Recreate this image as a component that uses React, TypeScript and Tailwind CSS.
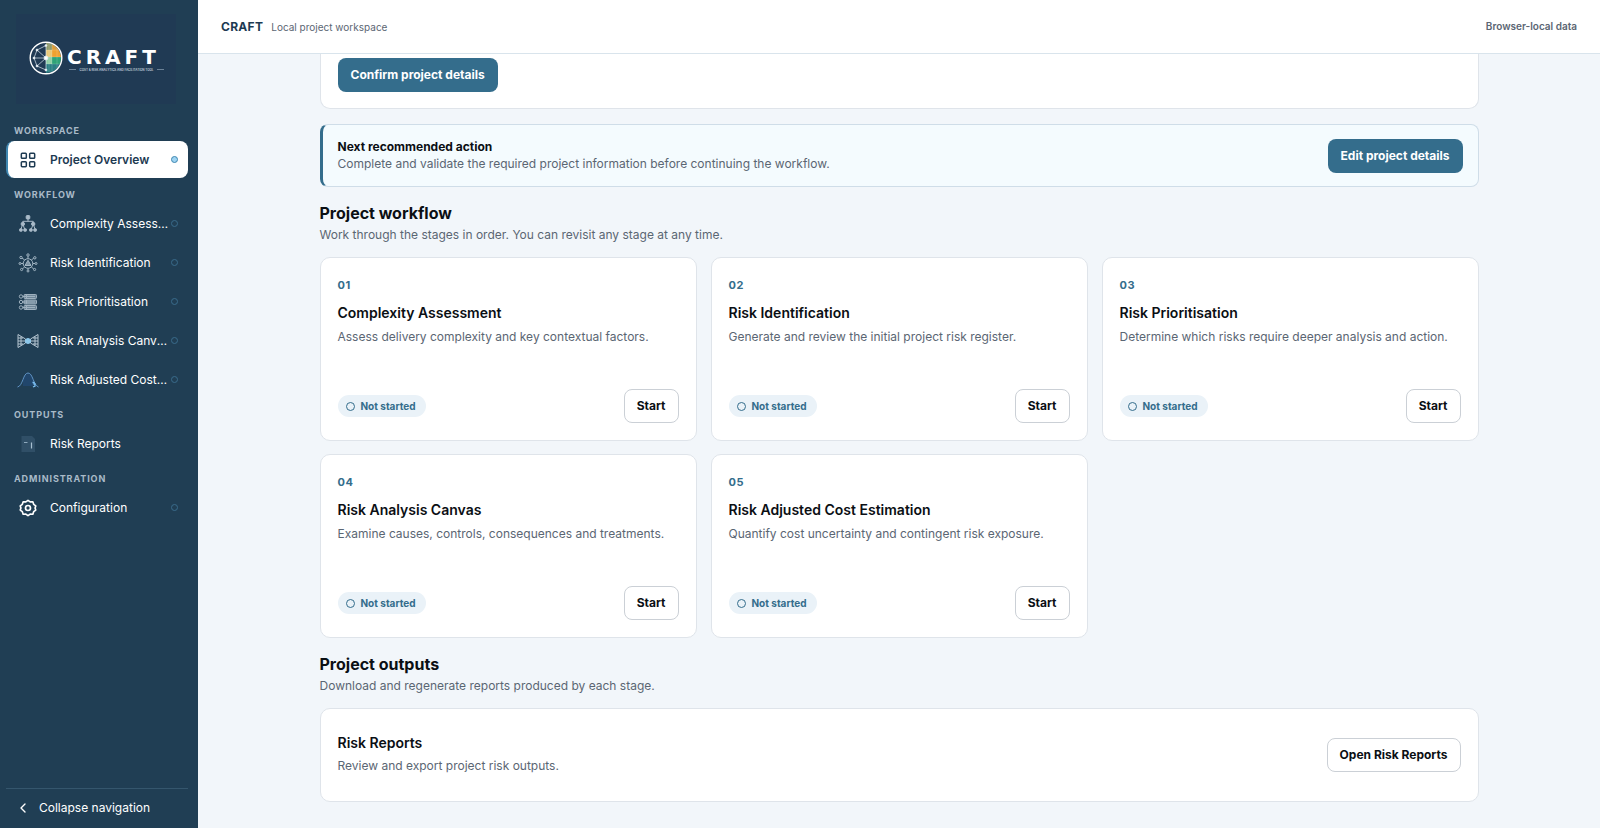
import React from "react";
import { ChevronLeft } from "lucide-react";

function OverviewIcon() {
  return (
    <svg viewBox="0 0 24 24" className="size-5" fill="none" stroke="currentColor" strokeWidth="1.8">
      <rect x="4" y="4" width="6" height="6" rx="1" />
      <rect x="14" y="4" width="6" height="6" rx="1" />
      <rect x="4" y="14" width="6" height="6" rx="1" />
      <rect x="14" y="14" width="6" height="6" rx="1" />
    </svg>
  );
}

function ComplexityIcon() {
  return (
    <svg viewBox="0 0 20 20" className="size-5" fill="#a9bac8" stroke="#a9bac8" strokeWidth="1">
      <rect x="8.2" y="1.6" width="3.6" height="3.4" rx="0.8" />
      <path d="M10 5v2.500M4.800 9.500V7.300h10.400V9.500M4.800 10l-2 5.500M4.800 10l2 5.500M15.200 10l-2 5.500M15.200 10l2 5.500" fill="none" />
      <circle cx="4.800" cy="10" r="1.700" />
      <circle cx="15.200" cy="10" r="1.700" />
      <rect x="1.600" y="14.800" width="2.600" height="2.400" rx="0.500" />
      <rect x="5.800" y="14.800" width="2.600" height="2.400" rx="0.500" />
      <rect x="11.600" y="14.800" width="2.600" height="2.400" rx="0.500" />
      <rect x="15.800" y="14.800" width="2.600" height="2.400" rx="0.500" />
    </svg>
  );
}

function IdentificationIcon() {
  return (
    <svg viewBox="0 0 20 20" className="size-5" fill="none" stroke="#a3b6c4" strokeWidth="1">
      <circle cx="10" cy="10.500" r="4.800" />
      <path d="M10 7.300l3 5.200H7z" fill="#7e95a6" />
      <path d="M10 5.700V3M10 15.300v1.700M5.200 10.500H3M14.800 10.500H17M6.700 7L4 5M13.300 7l2.500-1.800M6.700 14l-2.500 2M13.300 14l2.500 2" />
      <g fill="#203e54">
        <circle cx="10" cy="2" r="1.200" />
        <circle cx="3" cy="4.500" r="1.200" />
        <circle cx="16.800" cy="4.800" r="1.200" />
        <circle cx="2" cy="10.500" r="1" />
        <circle cx="18" cy="10.500" r="1" />
        <circle cx="3.600" cy="16.500" r="1.100" />
        <circle cx="10" cy="18" r="1" />
        <circle cx="16.600" cy="16.500" r="1.100" />
      </g>
    </svg>
  );
}

function PrioritisationIcon() {
  return (
    <svg viewBox="0 0 20 20" className="size-5" fill="none" stroke="#9fb1bf" strokeWidth="1">
      {[4.5, 10, 15.5].map((y) => (
        <g key={y}>
          <circle cx="3" cy={y} r="1.700" />
          <rect x="6" y={y - 2} width="12.500" height="4" rx="0.800" fill="#6f8799" />
          <path d={`M4.600 ${y}H17M8.500 ${y - 1.8}v3.600`} />
        </g>
      ))}
    </svg>
  );
}

function BowtieIcon() {
  return (
    <svg viewBox="0 0 22 16" className="h-4 w-[22px]" fill="none" stroke="#b4c4d0" strokeWidth="1">
      <path d="M1 1.500v13L8.500 10V6zM21 1.500v13L13.500 10V6z" />
      <path d="M1 5h5M1 8h7M1 11h5M16 5h5M14 8h7M16 11h5M4 3.500v9M18 3.500v9" />
      <circle cx="11" cy="8" r="2.500" fill="#8cc7ea" stroke="#8cc7ea" />
    </svg>
  );
}

function CurveIcon() {
  return (
    <svg viewBox="0 0 22 18" className="h-[18px] w-[22px]" fill="none">
      <path d="M6 15V8q2-5.500 5-5.500T16 8v7z" fill="#21466c" />
      <path d="M0.500 16C6 15 6 2 11 2s5 12 10.500 14" stroke="#5f93c4" strokeWidth="1" />
      <path d="M15.500 11.500h1.500v1.500h1v2l-2 1" stroke="#7cc0f5" strokeWidth="1.300" />
    </svg>
  );
}

function ReportsIcon() {
  return (
    <svg viewBox="0 0 20 20" className="size-5" fill="none">
      <path d="M3.500 2h10.500l3 3v13H3.500z" fill="#304f67" />
      <path d="M6 8.500h3.500" stroke="#8ea9bd" />
      <path d="M13.500 8.500v6" stroke="#a8c0d1" strokeWidth="1.200" />
    </svg>
  );
}

function ConfigurationIcon() {
  return (
    <svg viewBox="0 0 24 24" className="size-5" fill="none" stroke="currentColor" strokeWidth="2" strokeLinejoin="round">
      <path d="M12 2.800l2.600 1.900 3.200-.2 1 3.100 2.500 1.900-.8 2.500.8 2.500-2.500 1.900-1 3.100-3.200-.2-2.600 1.900-2.600-1.900-3.200.2-1-3.100-2.500-1.900.8-2.500-.8-2.500 2.500-1.900 1-3.100 3.200.2z" />
      <circle cx="12" cy="12" r="3" />
    </svg>
  );
}

function Logo() {
  return (
    <div className="mt-[14px] mr-[22px] ml-4 flex h-[90px] items-center justify-center bg-[#203a54]">
      <svg viewBox="0 1 136 36" className="h-9 w-[136px]" role="img" aria-label="CRAFT">
        <defs>
          <clipPath id="globe">
            <circle cx="18" cy="18" r="15" />
          </clipPath>
        </defs>
        <g clipPath="url(#globe)">
          <rect x="18" y="2" width="6" height="8" fill="#8f9a6a" />
          <rect x="24" y="2" width="10" height="8" fill="#d99c3c" />
          <rect x="18" y="10" width="6" height="7" fill="#e9c877" />
          <rect x="24" y="10" width="10" height="7" fill="#f0a12f" />
          <rect x="18" y="17" width="6" height="7" fill="#8fd0a5" />
          <rect x="24" y="17" width="10" height="7" fill="#2fa377" />
          <rect x="18" y="24" width="16" height="10" fill="#2b7f83" />
          <path d="M21 2v32M24 2v32M29 2v32M18 10h16M18 17h16M18 24h16" stroke="#ffffff" strokeOpacity="0.250" strokeWidth="0.600" />
        </g>
        <g stroke="#dbe7ef" strokeWidth="0.700" fill="#ffffff">
          <path d="M18 18L18 5.500M18 18L9 10M18 18H6M18 18L9 26M18 18v12M18 5.500L9 10L6 18L9 26L18 30" fill="none" />
          <circle cx="18" cy="5.500" r="1" />
          <circle cx="9" cy="10" r="1" />
          <circle cx="6" cy="18" r="1" />
          <circle cx="9" cy="26" r="1" />
          <circle cx="18" cy="30" r="1" />
          <circle cx="18" cy="18" r="2" />
        </g>
        <circle cx="18" cy="18" r="15.800" fill="none" stroke="#ffffff" strokeWidth="1.400" />
        <text x="39" y="24" fontSize="20" fontWeight="700" fill="#ffffff" fontFamily="'DejaVu Sans', sans-serif" className="tracking-[0.2em]">
          CRAFT
        </text>
        <path d="M41 29.500h7M129 29.500h7" stroke="#9fb4c4" strokeWidth="0.600" />
        <text x="88.500" y="30.600" textAnchor="middle" fontSize="3" fontWeight="600" fill="#c3d1dc" fontFamily="Inter, sans-serif">
          COST &amp; RISK ANALYTICS AND FACILITATION TOOL
        </text>
      </svg>
    </div>
  );
}

type Item = { label: string; icon: React.ReactNode; active?: boolean; dot?: boolean };

const groups: { title: string; items: Item[] }[] = [
  { title: "Workspace", items: [{ label: "Project Overview", icon: <OverviewIcon />, active: true, dot: true }] },
  {
    title: "Workflow",
    items: [
      { label: "Complexity Assessment", icon: <ComplexityIcon />, dot: true },
      { label: "Risk Identification", icon: <IdentificationIcon />, dot: true },
      { label: "Risk Prioritisation", icon: <PrioritisationIcon />, dot: true },
      { label: "Risk Analysis Canvas", icon: <BowtieIcon />, dot: true },
      { label: "Risk Adjusted Cost Estimation", icon: <CurveIcon />, dot: true },
    ],
  },
  { title: "Outputs", items: [{ label: "Risk Reports", icon: <ReportsIcon /> }] },
  { title: "Administration", items: [{ label: "Configuration", icon: <ConfigurationIcon />, dot: true }] },
];

function NavItem({ item }: { item: Item }) {
  return (
    <a
      href="#"
      title={item.label}
      aria-current={item.active ? "page" : undefined}
      className={
        item.active
          ? "flex h-[37px] items-center rounded-lg border-l-2 border-[#3e86b0] bg-white pr-[10px] pl-[9px] text-[12px] font-semibold text-[#1d3a52]"
          : "flex h-[37px] items-center rounded-lg border-l-2 border-transparent pr-[10px] pl-[9px] text-[12px] text-white"
      }
    >
      <span className="mr-[11px] flex w-[22px] shrink-0 justify-center">{item.icon}</span>
      <span className="min-w-0 flex-1 truncate">{item.label}</span>
      {item.dot && (
        <span
          className={
            item.active
              ? "ml-[2px] size-[7px] shrink-0 rounded-full border border-[#3e86b0] bg-[#9fd4f2]"
              : "ml-[2px] size-[7px] shrink-0 rounded-full border border-[#3a6c8c]"
          }
        />
      )}
    </a>
  );
}

function Sidebar() {
  return (
    <aside className="flex w-[198px] shrink-0 flex-col bg-[#203e54]">
      <Logo />
      <nav aria-label="Main" className="mt-[17px] flex flex-1 flex-col gap-[7px] pr-[10px] pl-[6px]">
        {groups.map((g) => (
          <div key={g.title}>
            <h2 className="h-5 pl-2 text-[9px] leading-5 font-bold tracking-widest text-[#a9bac8] uppercase">{g.title}</h2>
            <div className="flex flex-col gap-[2px]">
              {g.items.map((item) => (
                <NavItem key={item.label} item={item} />
              ))}
            </div>
          </div>
        ))}
      </nav>
      <div className="mr-[10px] ml-[6px] border-t border-[#35566d] pb-[2px]">
        <button type="button" className="flex h-[37px] items-center gap-2 pl-[9px] text-[12px] text-white">
          <ChevronLeft className="size-4" />
          Collapse navigation
        </button>
      </div>
    </aside>
  );
}

const primary = "h-[34px] shrink-0 rounded-lg bg-[#346d8c] px-[13px] text-[12px] font-bold text-white";
const secondary = "h-[34px] shrink-0 rounded-lg border border-[#cbd0d6] bg-white px-3 text-[12px] font-bold text-[#0b0f14]";

const stages = [
  ["01", "Complexity Assessment", "Assess delivery complexity and key contextual factors."],
  ["02", "Risk Identification", "Generate and review the initial project risk register."],
  ["03", "Risk Prioritisation", "Determine which risks require deeper analysis and action."],
  ["04", "Risk Analysis Canvas", "Examine causes, controls, consequences and treatments."],
  ["05", "Risk Adjusted Cost Estimation", "Quantify cost uncertainty and contingent risk exposure."],
];

function StageCard({ number, title, text }: { number: string; title: string; text: string }) {
  return (
    <article className="flex min-h-[184px] flex-col rounded-[10px] border border-[#dfe4ea] bg-white p-[17px]">
      <p className="mt-[2px] text-[11px] leading-4 font-bold tracking-wider text-[#346d8c]">{number}</p>
      <h3 className="mt-[10px] text-[14px] leading-5 font-semibold">{title}</h3>
      <p className="mt-[5px] text-[12px] leading-[18px] text-[#5b6673]">{text}</p>
      <div className="mt-auto flex items-center justify-between">
        <span className="flex h-[22px] items-center gap-[6px] rounded-full bg-[#eaf2f8] pr-[10px] pl-2 text-[10px] font-bold text-[#346d8c]">
          <span className="size-[9px] rounded-full border border-[#346d8c]" />
          Not started
        </span>
        <button type="button" className={secondary}>Start</button>
      </div>
    </article>
  );
}

function SectionHeading({ title, text }: { title: string; text: string }) {
  return (
    <div className="mt-[15px] mb-3">
      <h2 className="text-[16px] leading-[22px] font-bold">{title}</h2>
      <p className="mt-px text-[12px] leading-5 text-[#5b6673]">{text}</p>
    </div>
  );
}

export default function App() {
  return (
    <div className="flex h-screen bg-[#f2f6fa] font-['Inter',sans-serif] text-[#0b0f14]">
      <Sidebar />
      <div className="flex min-w-0 flex-1 flex-col">
        <header className="flex h-[54px] shrink-0 items-center justify-between border-b border-[#d9e4ec] bg-white px-[23px]">
          <div className="flex items-baseline gap-2">
            <strong className="text-[12px] font-bold tracking-wide text-[#1d3a52]">CRAFT</strong>
            <span className="text-[10px] text-[#5b6673]">Local project workspace</span>
          </div>
          <span className="text-[10px] font-semibold text-[#5b6673]">Browser-local data</span>
        </header>
        <main className="min-h-0 flex-1 overflow-hidden px-8">
          <div className="mx-auto max-w-[1159px]">
            <section className="rounded-b-[10px] border border-t-0 border-[#dfe4ea] bg-white px-[17px] pt-1 pb-4">
              <button type="button" className={primary}>Confirm project details</button>
            </section>
            <section className="mt-[15px] flex items-center justify-between rounded-lg border border-l-[3px] border-[#cfdde8] border-l-[#346d8c] bg-[#f4fbfe] px-[15px] py-[13px]">
              <div>
                <h2 className="text-[12px] leading-[17px] font-bold">Next recommended action</h2>
                <p className="text-[12px] leading-[18px] text-[#5b6673]">
                  Complete and validate the required project information before continuing the workflow.
                </p>
              </div>
              <button type="button" className={primary}>Edit project details</button>
            </section>
            <SectionHeading title="Project workflow" text="Work through the stages in order. You can revisit any stage at any time." />
            <div className="grid grid-cols-3 gap-x-[14px] gap-y-[13px]">
              {stages.map(([number, title, text]) => (
                <StageCard key={number} number={number} title={title} text={text} />
              ))}
            </div>
            <SectionHeading title="Project outputs" text="Download and regenerate reports produced by each stage." />
            <section className="flex min-h-[94px] items-center justify-between rounded-[10px] border border-[#dfe4ea] bg-white px-[17px]">
              <div className="pb-[2px]">
                <h3 className="text-[14px] leading-5 font-semibold">Risk Reports</h3>
                <p className="mt-1 text-[12px] leading-[18px] text-[#5b6673]">Review and export project risk outputs.</p>
              </div>
              <button type="button" className={secondary}>Open Risk Reports</button>
            </section>
          </div>
        </main>
      </div>
    </div>
  );
}
